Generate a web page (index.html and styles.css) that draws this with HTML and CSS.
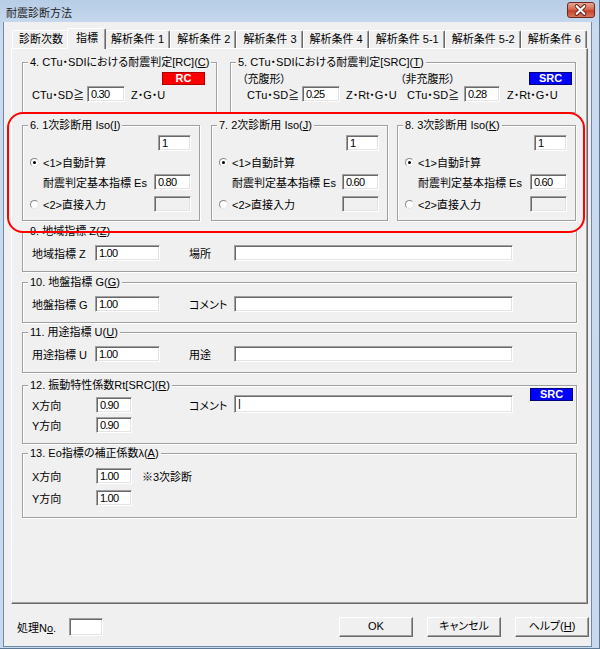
FILE: index.html
```html
<!DOCTYPE html>
<html lang="ja">
<head>
<meta charset="utf-8">
<title>耐震診断方法</title>
<link rel="stylesheet" href="styles.css">
</head>
<body>
<div class="window">
  <div class="titlebar">
    <span class="title">耐震診断方法</span>
    <span class="close">
      <svg width="28" height="16" viewBox="0 0 28 16">
        <path d="M10 4 L18 12 M18 4 L10 12" stroke="#5a1d12" stroke-width="4" stroke-linecap="round"/>
        <path d="M10 4 L18 12 M18 4 L10 12" stroke="#fff" stroke-width="2.2" stroke-linecap="round"/>
      </svg>
    </span>
  </div>
  <div class="client">
    <div class="tabs">
      <div class="tab">診断次数</div>
      <div class="tab active">指標</div>
      <div class="tab">解析条件 1</div>
      <div class="tab">解析条件 2</div>
      <div class="tab">解析条件 3</div>
      <div class="tab">解析条件 4</div>
      <div class="tab">解析条件 5-1</div>
      <div class="tab">解析条件 5-2</div>
      <div class="tab">解析条件 6</div>
    </div>
    <div class="panel">
      <div class="grow grow-1">
        <div class="gb gb4">
          <div class="gb-t">4. CTu・SDIにおける耐震判定[RC](<u>C</u>)</div>
          <div class="arow arow-right"><span class="badge rc">RC</span></div>
          <div class="line line-a">
            <span class="lbl w55">CTu・SD≧</span><span class="edit w38">0.30</span><span class="ml6">Z・G・U</span>
          </div>
        </div>
        <div class="gb gb5">
          <div class="gb-t">5. CTu・SDIにおける耐震判定[SRC](<u>T</u>)</div>
          <div class="arow">
            <span class="paren1">（充腹形）</span><span>（非充腹形）</span><span class="badge src push">SRC</span>
          </div>
          <div class="line line-b">
            <span class="lbl w55">CTu・SD≧</span><span class="edit w38">0.25</span><span class="lbl w61 ml6">Z・Rt・G・U</span><span class="lbl w57">CTu・SD≧</span><span class="edit w36">0.28</span><span class="ml7">Z・Rt・G・U</span>
          </div>
        </div>
      </div>

      <div class="grow grow-2">
        <div class="gb gbi g6">
          <div class="gb-t">6. 1次診断用 Iso(<u>I</u>)</div>
          <div class="irow"><span class="edit w33">1</span></div>
          <div class="rrow"><span class="radio on"></span>&lt;1&gt;自動計算</div>
          <div class="esrow"><span>耐震判定基本指標 Es</span><span class="edit w37">0.80</span></div>
          <div class="rrow r2"><span class="radio"></span>&lt;2&gt;直接入力<span class="edit w37 dis"></span></div>
        </div>
        <div class="gb gbi g7">
          <div class="gb-t">7. 2次診断用 Iso(<u>J</u>)</div>
          <div class="irow"><span class="edit w33">1</span></div>
          <div class="rrow"><span class="radio on"></span>&lt;1&gt;自動計算</div>
          <div class="esrow"><span>耐震判定基本指標 Es</span><span class="edit w37">0.60</span></div>
          <div class="rrow r2"><span class="radio"></span>&lt;2&gt;直接入力<span class="edit w37 dis"></span></div>
        </div>
        <div class="gb gbi g8">
          <div class="gb-t">8. 3次診断用 Iso(<u>K</u>)</div>
          <div class="irow"><span class="edit w33">1</span></div>
          <div class="rrow"><span class="radio on"></span>&lt;1&gt;自動計算</div>
          <div class="esrow"><span>耐震判定基本指標 Es</span><span class="edit w37">0.60</span></div>
          <div class="rrow r2"><span class="radio"></span>&lt;2&gt;直接入力<span class="edit w37 dis"></span></div>
        </div>
      </div>

      <div class="gb gbs g9">
        <div class="gb-t">9. 地域指標 Z(<u>Z</u>)</div>
        <div class="line line-s">
          <span class="lbl w63">地域指標 Z</span><span class="edit w65">1.00</span><span class="lbl w45 ml29">場所</span><span class="edit w279"></span>
        </div>
      </div>
      <div class="gb gbs g10">
        <div class="gb-t">10. 地盤指標 G(<u>G</u>)</div>
        <div class="line line-s">
          <span class="lbl w63">地盤指標 G</span><span class="edit w65">1.00</span><span class="lbl w45 ml29">コメント</span><span class="edit w279"></span>
        </div>
      </div>
      <div class="gb gbs g11">
        <div class="gb-t">11. 用途指標 U(<u>U</u>)</div>
        <div class="line line-s">
          <span class="lbl w63">用途指標 U</span><span class="edit w65">1.00</span><span class="lbl w45 ml29">用途</span><span class="edit w279"></span>
        </div>
      </div>

      <div class="gb g12">
        <div class="gb-t">12. 振動特性係数Rt[SRC](<u>R</u>)</div>
        <div class="line line-x">
          <span class="lbl w64">X方向</span><span class="edit w36">0.90</span><span class="lbl w45 ml57">コメント</span><span class="edit w279 tall">|</span><span class="badge src push up">SRC</span>
        </div>
        <div class="line line-y">
          <span class="lbl w64">Y方向</span><span class="edit w36">0.90</span>
        </div>
      </div>

      <div class="gb g13">
        <div class="gb-t">13. Eo指標の補正係数λ(<u>A</u>)</div>
        <div class="line line-x13">
          <span class="lbl w64">X方向</span><span class="edit w36">1.00</span><span class="ml10">※3次診断</span>
        </div>
        <div class="line line-y13">
          <span class="lbl w64">Y方向</span><span class="edit w36">1.00</span>
        </div>
      </div>
    </div>

    <div class="footer">
      <span class="lbl w52">処理N<u>o</u>.</span><span class="edit w34 h18"></span>
      <span class="btn first">OK</span>
      <span class="btn">キャンセル</span>
      <span class="btn">ヘルプ(<u>H</u>)</span>
    </div>
  </div>
</div>
<div class="mark"></div>
</body>
</html>
```

FILE: styles.css
```css
html, body {
  margin: 0;
  padding: 0;
}
body {
  width: 600px;
  height: 649px;
  overflow: hidden;
  position: relative;
  font-family: "Liberation Sans", "Noto Sans CJK JP", sans-serif;
  font-size: 11px;
  font-feature-settings: "palt";
  color: #000;
  background: #c2d6ec;
}
u { text-decoration: underline; text-underline-offset: 1px; }

.window {
  width: 600px;
  height: 649px;
  display: flex;
  flex-direction: column;
  box-sizing: border-box;
  background: linear-gradient(#b7cde6, #c9dbef 30px, #c6d9ee);
  border-right: 1px solid #5d7894;
  border-bottom: 1px solid #5d7894;
}

.titlebar {
  height: 22px;
  flex: none;
  display: flex;
  align-items: center;
  justify-content: space-between;
  padding: 0 4px 0 6px;
}
.title {
  font-family: "Noto Sans CJK JP", sans-serif;
  font-size: 11px;
  color: #1e1e1e;
  margin-top: 2px;
}
.close {
  width: 28px;
  height: 16px;
  margin-top: -2px;
  border: 1px solid #6d2a20;
  border-radius: 3px;
  background: linear-gradient(#e8a493, #d56b52 45%, #c5432a 55%, #d8735a);
  display: flex;
  box-sizing: border-box;
  align-items: center;
  justify-content: center;
  overflow: hidden;
}
.close svg { display: block; margin-left: -1px; }

.client {
  flex: 1;
  margin: 0 7px 1px 3px;
  background: #f0f0f0;
  border: 1px solid #6f8aa6;
  border-top: none;
  display: flex;
  flex-direction: column;
}

/* tabs */
.tabs {
  display: flex;
  align-items: flex-end;
  height: 20px;
  margin: 6px 0 0 8px;
  position: relative;
  z-index: 2;
}
.tab {
  height: 18px;
  box-sizing: border-box;
  padding: 0 5px 0 6px;
  line-height: 17px;
  border-top: 1px solid #fff;
  border-left: 1px solid #fff;
  border-right: 1px solid #696969;
  box-shadow: inset -1px 0 #a0a0a0;
  border-radius: 2px 2px 0 0;
  white-space: nowrap;
  background: #f0f0f0;
}
.tab.active {
  height: 21px;
  margin: 0 -2px -1px;
  padding: 0 7px 0 8px;
  line-height: 19px;
  position: relative;
  z-index: 3;
}

/* panel */
.panel {
  margin: 0 3px 0 7px;
  height: 556px;
  box-sizing: border-box;
  border: 1px solid;
  border-color: #fff #696969 #696969 #fff;
  box-shadow: inset -1px -1px #a0a0a0;
  padding: 13px 10px 0 10px;
}

/* group boxes */
.gb {
  box-sizing: border-box;
  border: 1px solid #a0a0a0;
  box-shadow: inset 1px 1px #fff, 1px 1px #fff;
}
.gb-t {
  height: 13px;
  line-height: 13px;
  margin: -7px 0 -6px 5px;
  padding: 0 2px;
  background: #f0f0f0;
  width: max-content;
  white-space: nowrap;
  position: relative;
}

.grow { display: flex; }
.grow-1 .gb { height: 51px; }
.gb4 { width: 195px; }
.gb5 { width: 346px; margin-left: 13px; }

.arow {
  display: flex;
  align-items: center;
  height: 12px;
  margin-top: 9px;
  padding-left: 11px;
  padding-right: 3px;
  white-space: nowrap;
}
.arow-right { justify-content: flex-end; padding-right: 11px; }
.paren1 { width: 158px; }
.push { margin-left: auto; }

.badge {
  box-sizing: border-box;
  width: 43px;
  height: 13px;
  line-height: 11px;
  text-align: center;
  color: #fff;
  font-weight: bold;
  font-size: 11px;
}
.rc { background: #ff0000; border: 1px solid #b00000; }
.src { background: #0000ff; border: 1px solid #00007a; }

.line {
  display: flex;
  align-items: center;
  height: 16px;
  padding-left: 9px;
  white-space: nowrap;
}
.line-a { margin-top: 2px; }
.line-b { margin-top: 2px; padding-left: 16px; }

.lbl { display: inline-block; flex: none; }
.w45 { width: 45px; }
.w52 { width: 52px; }
.w55 { width: 55px; }
.w57 { width: 57px; }
.w61 { width: 61px; }
.w63 { width: 63px; }
.w64 { width: 64px; }
.ml6 { margin-left: 6px; }
.ml7 { margin-left: 7px; }
.ml10 { margin-left: 10px; }
.ml29 { margin-left: 29px; }
.ml57 { margin-left: 57px; }

.edit {
  display: inline-block;
  flex: none;
  box-sizing: border-box;
  height: 16px;
  background: #fff;
  border: 1px solid;
  border-color: #a0a0a0 #fff #fff #a0a0a0;
  box-shadow: inset 1px 1px #696969, inset -1px -1px #e3e3e3;
  padding: 0 0 0 3px;
  font-family: "Liberation Sans", sans-serif;
  font-size: 11px;
  letter-spacing: -0.8px;
  line-height: 14px;
  overflow: hidden;
}
.edit.dis { background: #f0f0f0; }
.w33 { width: 33px; }
.w34 { width: 34px; }
.w36 { width: 36px; }
.w37 { width: 37px; }
.w38 { width: 38px; }
.w65 { width: 65px; }
.w279 { width: 279px; }
.h18 { height: 18px; }

/* iso groups */
.grow-2 { margin-top: 12px; }
.gbi { height: 96px; }
.g6 { width: 178px; }
.g7 { width: 177px; margin-left: 11px; }
.g8 { width: 179px; margin-left: 9px; }

.irow {
  display: flex;
  justify-content: flex-end;
  margin-top: 9px;
  padding-right: 8px;
}
.rrow {
  display: flex;
  align-items: center;
  height: 16px;
  margin-top: 3px;
  padding-left: 7px;
  padding-right: 8px;
  white-space: nowrap;
}
.rrow.r2 { margin-top: 6px; }
.rrow .edit { margin-left: auto; }
.esrow {
  display: flex;
  align-items: center;
  height: 16px;
  margin-top: 4px;
  padding-left: 20px;
  padding-right: 8px;
  white-space: nowrap;
}
.esrow .edit { margin-left: auto; }

.radio {
  width: 9px;
  height: 9px;
  box-sizing: border-box;
  border-radius: 50%;
  border: 1px solid;
  border-color: #8a8a8a #e6e6e6 #e6e6e6 #8a8a8a;
  background: #fff;
  margin-right: 4px;
  position: relative;
  flex: none;
}
.radio.on::after {
  content: "";
  position: absolute;
  left: 2px;
  top: 2px;
  width: 3px;
  height: 3px;
  border-radius: 50%;
  background: #000;
}

/* single-row groups */
.gbs { height: 41px; }
.g9 { margin-top: 10px; }
.g10 { margin-top: 10px; }
.g11 { margin-top: 9px; }
.line-s { margin-top: 13px; }

.g12 { height: 59px; margin-top: 12px; }
.line-x { margin-top: 9px; height: 18px; align-items: flex-end; padding-right: 3px; }
.edit.tall { height: 18px; }
.badge.up { align-self: flex-start; margin-top: -7px; }
.line-y { margin-top: 4px; }

.g13 { height: 65px; margin-top: 9px; }
.line-x13 { margin-top: 14px; }
.line-y13 { margin-top: 6px; }

/* footer */
.footer {
  display: flex;
  align-items: center;
  padding: 13px 2px 0 13px;
  white-space: nowrap;
}
.btn {
  box-sizing: border-box;
  width: 74px;
  height: 20px;
  line-height: 17px;
  text-align: center;
  border: 1px solid;
  border-color: #fff #696969 #696969 #fff;
  box-shadow: inset -1px -1px #a0a0a0;
  margin-left: 14px;
}
.btn.first { margin-left: auto; }

/* red highlight drawn over the dialog */
.mark {
  position: absolute;
  left: 7px;
  top: 112px;
  width: 578px;
  height: 121px;
  box-sizing: border-box;
  border: 2px solid #f00;
  border-radius: 16px;
  pointer-events: none;
}
```
